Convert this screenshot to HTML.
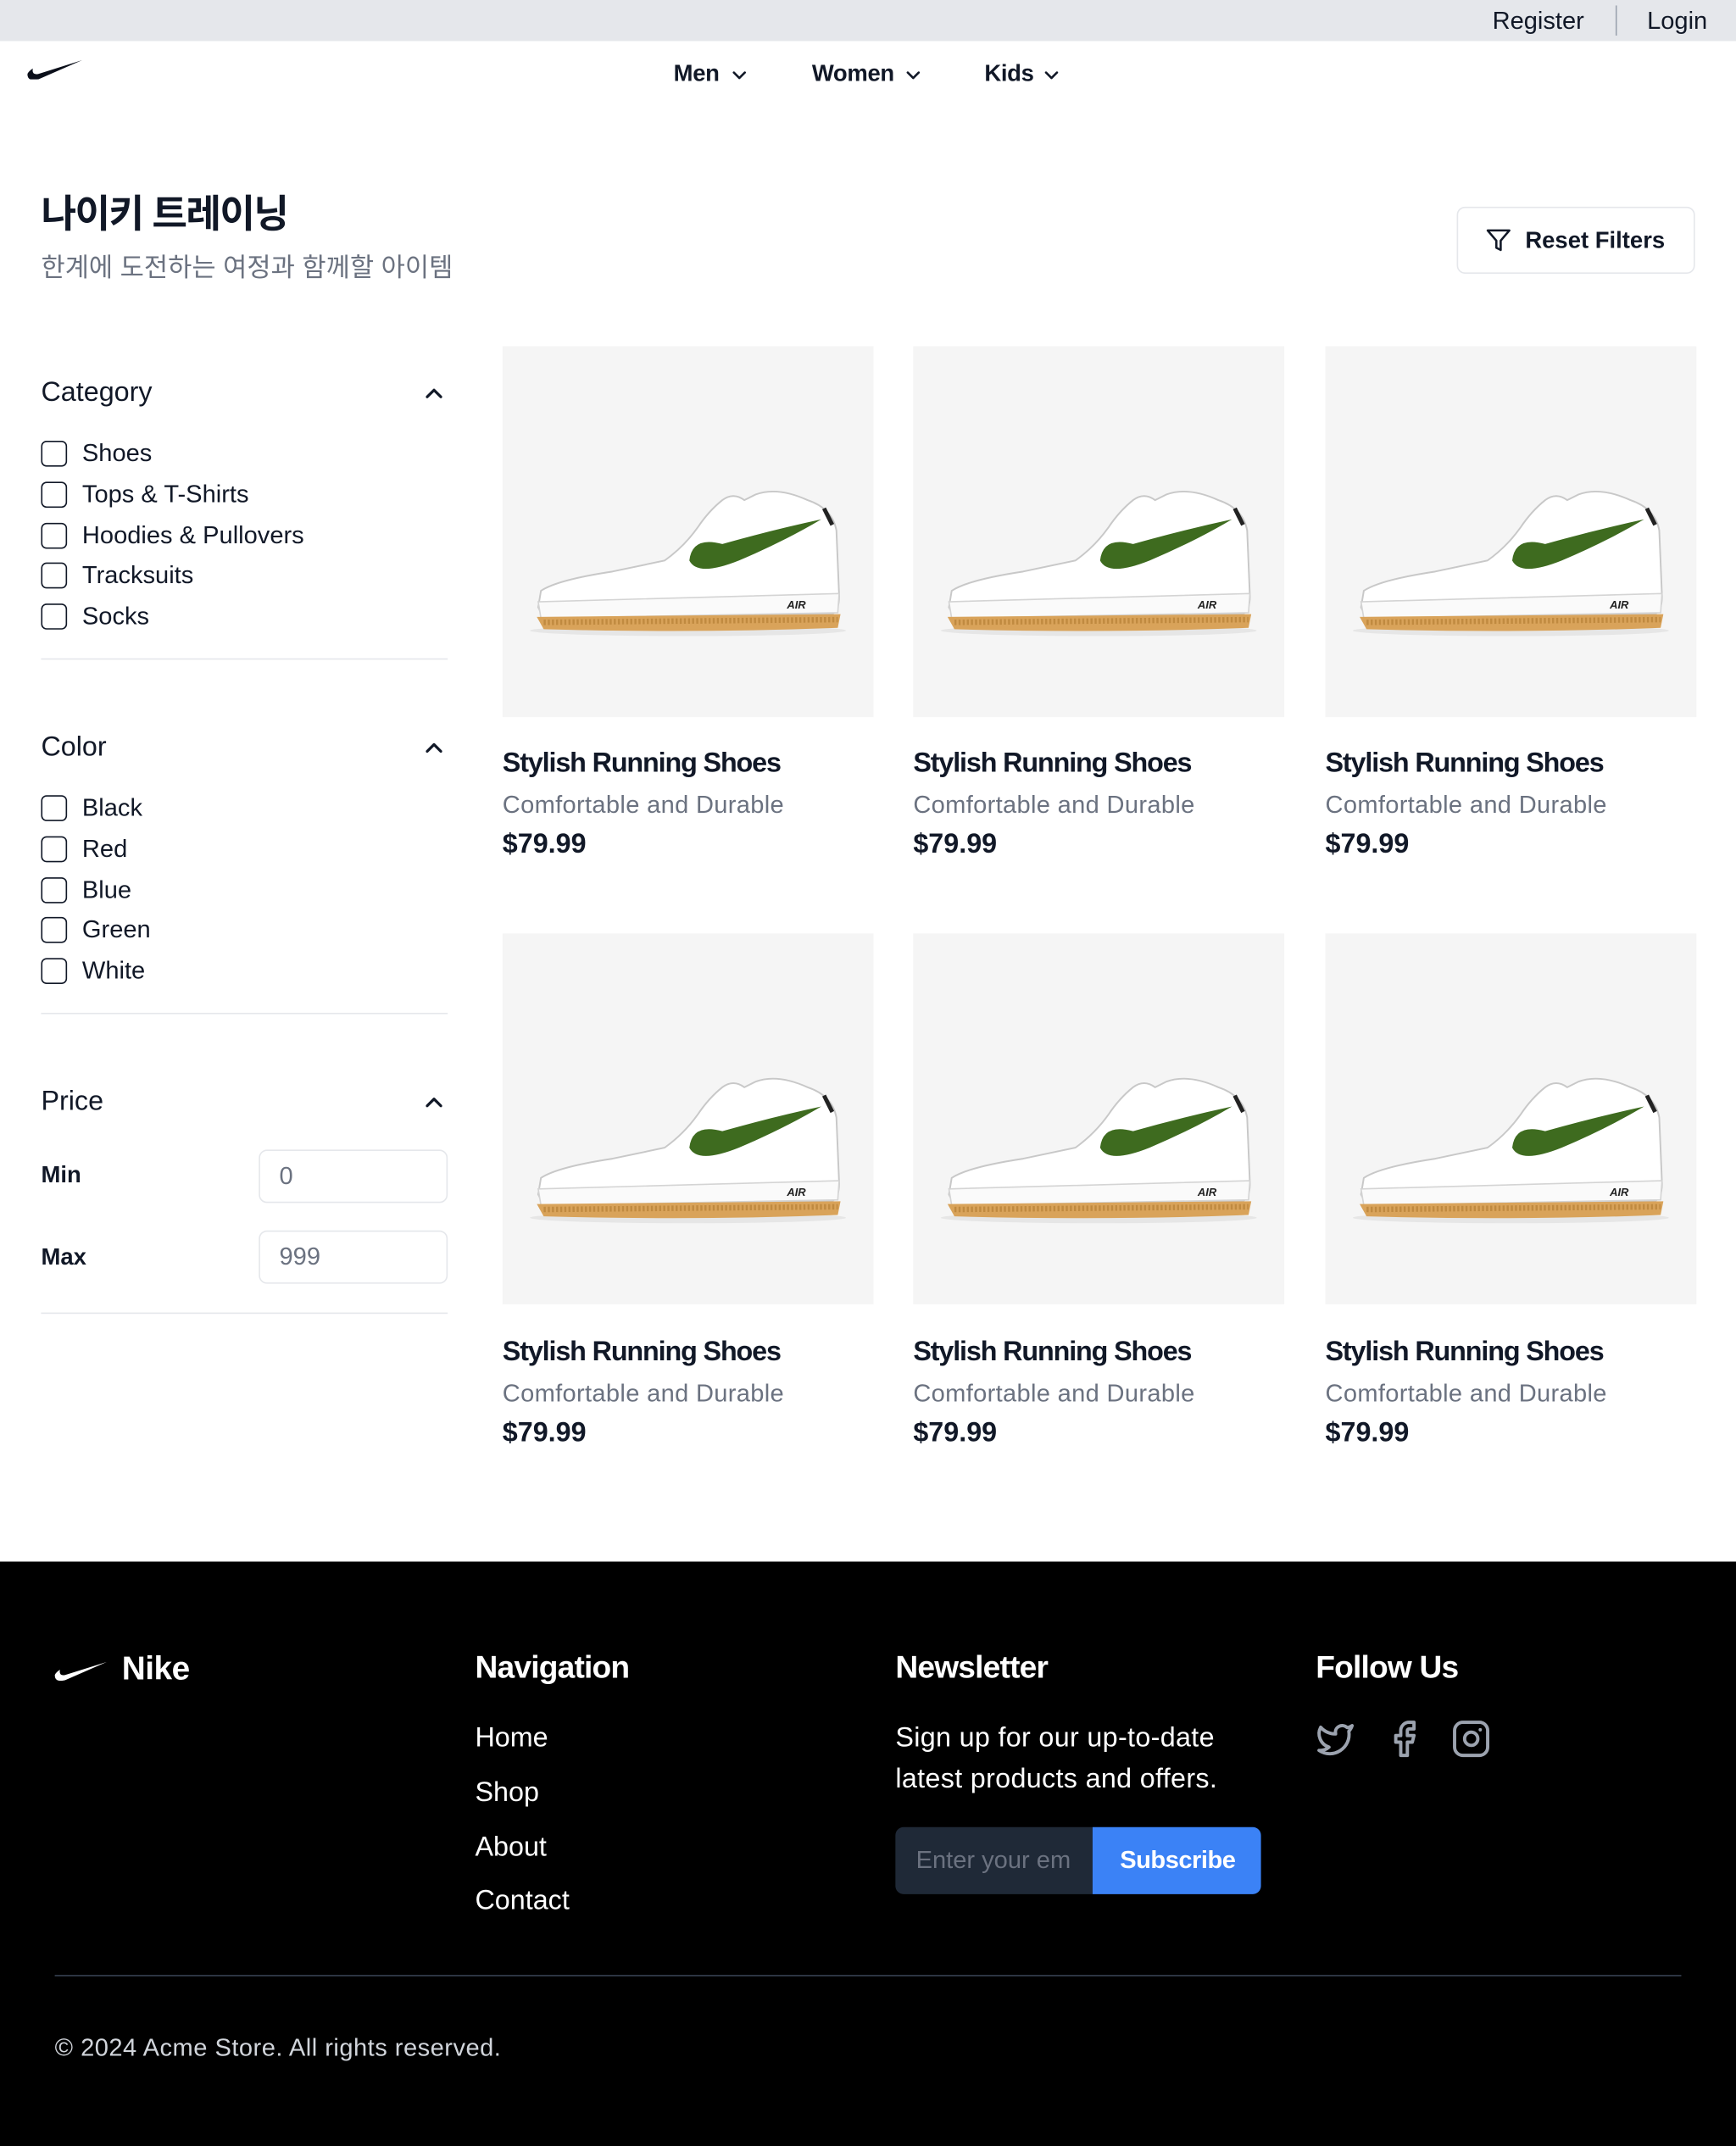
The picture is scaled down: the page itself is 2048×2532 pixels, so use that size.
<!DOCTYPE html>
<html><head><meta charset="utf-8">
<style>
*{margin:0;padding:0;box-sizing:border-box}
html,body{width:2048px;height:2532px;overflow:hidden;background:#fff}
#w{position:absolute;left:0;top:0;width:1268px;height:1568px;transform:scale(1.6152,1.6148);transform-origin:0 0;font-family:"Liberation Sans","Noto Sans CJK KR",sans-serif;color:#111827}
.a{position:absolute;white-space:nowrap}
.t18{font-size:18px;line-height:22px}
.cb{position:absolute;width:19px;height:19px;border:1.6px solid #111827;border-radius:4px}
.hr{position:absolute;left:30px;width:297px;height:1px;background:#e5e7eb}
.h{font-size:20px;line-height:24px}
.img{position:absolute;width:271px;height:271px;background:#f5f5f5}
.pt{font-size:20px;line-height:24px;font-weight:bold;letter-spacing:-0.7px}
.ps{font-size:18px;line-height:22px;color:#6b7280;letter-spacing:0.2px}
.pp{font-size:20px;line-height:24px;font-weight:bold}
.f{color:#fff}
</style></head><body><div id="w">
<svg width="0" height="0" style="position:absolute"><defs>
<g id="shoe">
<ellipse cx="135" cy="207" rx="115" ry="4" fill="#e6e6e6"/>
<path d="M26 190 L28 178 Q40 170 80 164 L118 156 Q132 146 142 132 Q150 120 160 112 Q168 106 176 112 L184 108 Q200 102 222 112 Q240 118 243 134 L245 182 Q245 192 240 195 L30 198 Z" fill="#fff" stroke="#c8c8c8" stroke-width="1.2"/>
<path d="M26 186 L245 180 L244 194 L28 198 Z" fill="#fafafa" stroke="#d4d4d4" stroke-width="1"/>
<path d="M25 197 L246 195 L244 205 Q140 209 30 206 Z" fill="#d9a35a"/>
<path d="M30 201 L244 199" stroke="#c08a40" stroke-width="4" stroke-dasharray="1.5 1.5"/>
<path d="M136 156 Q138 138 160 144 Q195 134 232 126 Q205 142 172 156 Q142 168 136 156 Z" fill="#3e6b1f"/>
<path d="M234 118 L240 130" stroke="#222" stroke-width="3"/>
<text x="207" y="191" font-family="Liberation Sans" font-style="italic" font-weight="bold" font-size="8" fill="#222">AIR</text>
</g>
<path id="sw" d="M0 12 Q0 18 8 16 L40 2 L8 12 Q3 13 4 8 Q1 10 0 12 Z"/>
<path id="up" d="M1 7 L6 2 L11 7" fill="none" stroke="#111827" stroke-width="2" stroke-linecap="round" stroke-linejoin="round"/>
<path id="dn" d="M1 1 L5 5 L9 1" fill="none" stroke="#111827" stroke-width="1.6" stroke-linecap="round" stroke-linejoin="round"/>
</defs></svg>

<div class="a" style="left:0;top:0;width:1268px;height:30px;background:#e5e7eb"></div>
<div class="a t18" style="left:1090px;top:4px">Register</div>
<div class="a" style="left:1180px;top:4px;width:1px;height:22px;background:#9ca3af"></div>
<div class="a t18" style="left:1203px;top:4px">Login</div>
<svg class="a" style="left:20px;top:42px" width="40" height="16" viewBox="0 0 40 16"><use href="#sw" fill="#0b0f1a"/></svg>
<div class="a t18" style="left:492px;top:43px;font-weight:bold;font-size:17px;letter-spacing:-0.2px">Men</div>
<svg class="a" style="left:535px;top:52px" width="11" height="7"><use href="#dn"/></svg>
<div class="a t18" style="left:593px;top:43px;font-weight:bold;font-size:17px;letter-spacing:-0.2px">Women</div>
<svg class="a" style="left:662px;top:52px" width="11" height="7"><use href="#dn"/></svg>
<div class="a t18" style="left:719px;top:43px;font-weight:bold;font-size:17px;letter-spacing:-0.2px">Kids</div>
<svg class="a" style="left:763px;top:52px" width="11" height="7"><use href="#dn"/></svg>

<div class="a" style="left:30px;top:140px;font-size:28px;line-height:34px;font-weight:bold;letter-spacing:-1px">나이키 트레이닝</div>
<div class="a" style="left:30px;top:185px;font-size:19px;line-height:24px;color:#6b7280">한계에 도전하는 여정과 함께할 아이템</div>
<div class="a" style="left:1064px;top:151px;width:174px;height:49px;border:1px solid #e5e7eb;border-radius:6px"></div>
<svg class="a" style="left:1085px;top:166px" width="19" height="19" viewBox="0 0 24 24" fill="none" stroke="#111827" stroke-width="2" stroke-linejoin="round"><path d="M22 3H2l8 9.46V19l4 2v-8.54L22 3z"/></svg>
<div class="a t18" style="left:1114px;top:165px;font-weight:bold;font-size:17px">Reset Filters</div>

<div class="a h" style="left:30px;top:275px">Category</div>
<svg class="a" style="left:311px;top:283px" width="12" height="9"><use href="#up"/></svg>
<div class="cb" style="left:30px;top:322px"></div><div class="a t18" style="left:60px;top:320px">Shoes</div>
<div class="cb" style="left:30px;top:352px"></div><div class="a t18" style="left:60px;top:350px">Tops &amp; T-Shirts</div>
<div class="cb" style="left:30px;top:382px"></div><div class="a t18" style="left:60px;top:380px">Hoodies &amp; Pullovers</div>
<div class="cb" style="left:30px;top:411px"></div><div class="a t18" style="left:60px;top:409px">Tracksuits</div>
<div class="cb" style="left:30px;top:441px"></div><div class="a t18" style="left:60px;top:439px">Socks</div>
<div class="hr" style="top:481px"></div>

<div class="a h" style="left:30px;top:534px">Color</div>
<svg class="a" style="left:311px;top:542px" width="12" height="9"><use href="#up"/></svg>
<div class="cb" style="left:30px;top:581px"></div><div class="a t18" style="left:60px;top:579px">Black</div>
<div class="cb" style="left:30px;top:611px"></div><div class="a t18" style="left:60px;top:609px">Red</div>
<div class="cb" style="left:30px;top:641px"></div><div class="a t18" style="left:60px;top:639px">Blue</div>
<div class="cb" style="left:30px;top:670px"></div><div class="a t18" style="left:60px;top:668px">Green</div>
<div class="cb" style="left:30px;top:700px"></div><div class="a t18" style="left:60px;top:698px">White</div>
<div class="hr" style="top:740px"></div>

<div class="a h" style="left:30px;top:793px">Price</div>
<svg class="a" style="left:311px;top:801px" width="12" height="9"><use href="#up"/></svg>
<div class="a t18" style="left:30px;top:848px;font-weight:bold;font-size:17px">Min</div>
<div class="a" style="left:189px;top:840px;width:138px;height:39px;border:1px solid #e5e7eb;border-radius:6px"></div>
<div class="a t18" style="left:204px;top:848px;color:#6b7280">0</div>
<div class="a t18" style="left:30px;top:908px;font-weight:bold;font-size:17px">Max</div>
<div class="a" style="left:189px;top:899px;width:138px;height:39px;border:1px solid #e5e7eb;border-radius:6px"></div>
<div class="a t18" style="left:204px;top:907px;color:#6b7280">999</div>
<div class="hr" style="top:959px"></div>

<div class="img" style="left:367px;top:253px"><svg width="271" height="271" viewBox="0 0 270 270"><use href="#shoe"/></svg></div>
<div class="img" style="left:667px;top:253px"><svg width="271" height="271" viewBox="0 0 270 270"><use href="#shoe"/></svg></div>
<div class="img" style="left:968px;top:253px"><svg width="271" height="271" viewBox="0 0 270 270"><use href="#shoe"/></svg></div>
<div class="img" style="left:367px;top:682px"><svg width="271" height="271" viewBox="0 0 270 270"><use href="#shoe"/></svg></div>
<div class="img" style="left:667px;top:682px"><svg width="271" height="271" viewBox="0 0 270 270"><use href="#shoe"/></svg></div>
<div class="img" style="left:968px;top:682px"><svg width="271" height="271" viewBox="0 0 270 270"><use href="#shoe"/></svg></div>

<div class="a pt" style="left:367px;top:546px">Stylish Running Shoes</div><div class="a ps" style="left:367px;top:577px">Comfortable and Durable</div><div class="a pp" style="left:367px;top:605px">$79.99</div>
<div class="a pt" style="left:667px;top:546px">Stylish Running Shoes</div><div class="a ps" style="left:667px;top:577px">Comfortable and Durable</div><div class="a pp" style="left:667px;top:605px">$79.99</div>
<div class="a pt" style="left:968px;top:546px">Stylish Running Shoes</div><div class="a ps" style="left:968px;top:577px">Comfortable and Durable</div><div class="a pp" style="left:968px;top:605px">$79.99</div>
<div class="a pt" style="left:367px;top:976px">Stylish Running Shoes</div><div class="a ps" style="left:367px;top:1007px">Comfortable and Durable</div><div class="a pp" style="left:367px;top:1035px">$79.99</div>
<div class="a pt" style="left:667px;top:976px">Stylish Running Shoes</div><div class="a ps" style="left:667px;top:1007px">Comfortable and Durable</div><div class="a pp" style="left:667px;top:1035px">$79.99</div>
<div class="a pt" style="left:968px;top:976px">Stylish Running Shoes</div><div class="a ps" style="left:968px;top:1007px">Comfortable and Durable</div><div class="a pp" style="left:968px;top:1035px">$79.99</div>

<div class="a" style="left:0;top:1141px;width:1268px;height:427px;background:#000"></div>
<svg class="a" style="left:40px;top:1212px" width="38" height="16" viewBox="0 0 40 16"><use href="#sw" fill="#fff"/></svg>
<div class="a f" style="left:89px;top:1205px;font-size:24px;line-height:30px;font-weight:bold;letter-spacing:-0.3px">Nike</div>
<div class="a f" style="left:347px;top:1203px;font-size:23px;line-height:30px;font-weight:bold;letter-spacing:-0.5px">Navigation</div>
<div class="a f" style="left:654px;top:1203px;font-size:23px;line-height:30px;font-weight:bold;letter-spacing:-0.5px">Newsletter</div>
<div class="a f" style="left:961px;top:1203px;font-size:23px;line-height:30px;font-weight:bold;letter-spacing:-0.5px">Follow Us</div>
<div class="a f" style="left:347px;top:1257px;font-size:20px;line-height:26px">Home</div>
<div class="a f" style="left:347px;top:1297px;font-size:20px;line-height:26px">Shop</div>
<div class="a f" style="left:347px;top:1337px;font-size:20px;line-height:26px">About</div>
<div class="a f" style="left:347px;top:1376px;font-size:20px;line-height:26px">Contact</div>
<div class="a f" style="left:654px;top:1255px;font-size:20px;line-height:30px;letter-spacing:0.2px">Sign up for our up-to-date<br>latest products and offers.</div>
<div class="a" style="left:654px;top:1335px;width:144px;height:49px;background:#1f2937;border-radius:6px 0 0 6px"></div>
<div class="a t18" style="left:669px;top:1348px;color:#6b7280;width:120px;overflow:hidden">Enter your em</div>
<div class="a" style="left:798px;top:1335px;width:123px;height:49px;background:#3b82f6;border-radius:0 6px 6px 0"></div>
<div class="a t18" style="left:818px;top:1348px;color:#fff;font-weight:bold;letter-spacing:-0.3px">Subscribe</div>
<svg class="a" style="left:961px;top:1256px" width="29" height="29" viewBox="0 0 24 24" fill="none" stroke="#9ca3af" stroke-width="2" stroke-linejoin="round" stroke-linecap="round"><path d="M22 4s-.7 2.1-2 3.4c1.6 10-9.4 17.3-18 11.6 2.2.1 4.4-.6 6-2C3 15.5.5 9.6 3 5c2.2 2.6 5.6 4.1 9 4-.9-4.2 4-6.6 7-3.8 1.1 0 3-1.2 3-1.2z"/></svg>
<svg class="a" style="left:1011px;top:1256px" width="29" height="29" viewBox="0 0 24 24" fill="none" stroke="#9ca3af" stroke-width="2" stroke-linejoin="round" stroke-linecap="round"><path d="M18 2h-3a5 5 0 0 0-5 5v3H7v4h3v8h4v-8h3l1-4h-4V7a1 1 0 0 1 1-1h3z"/></svg>
<svg class="a" style="left:1060px;top:1256px" width="29" height="29" viewBox="0 0 24 24" fill="none" stroke="#9ca3af" stroke-width="2" stroke-linejoin="round" stroke-linecap="round"><rect x="2" y="2" width="20" height="20" rx="5"/><path d="M16 11.37A4 4 0 1 1 12.63 8 4 4 0 0 1 16 11.37z"/><path d="M17.5 6.5h.01"/></svg>
<div class="a" style="left:40px;top:1443px;width:1188px;height:1px;background:#374151"></div>
<div class="a t18" style="left:40px;top:1485px;color:#d1d5db;letter-spacing:0.3px">© 2024 Acme Store. All rights reserved.</div>
</div></body></html>
